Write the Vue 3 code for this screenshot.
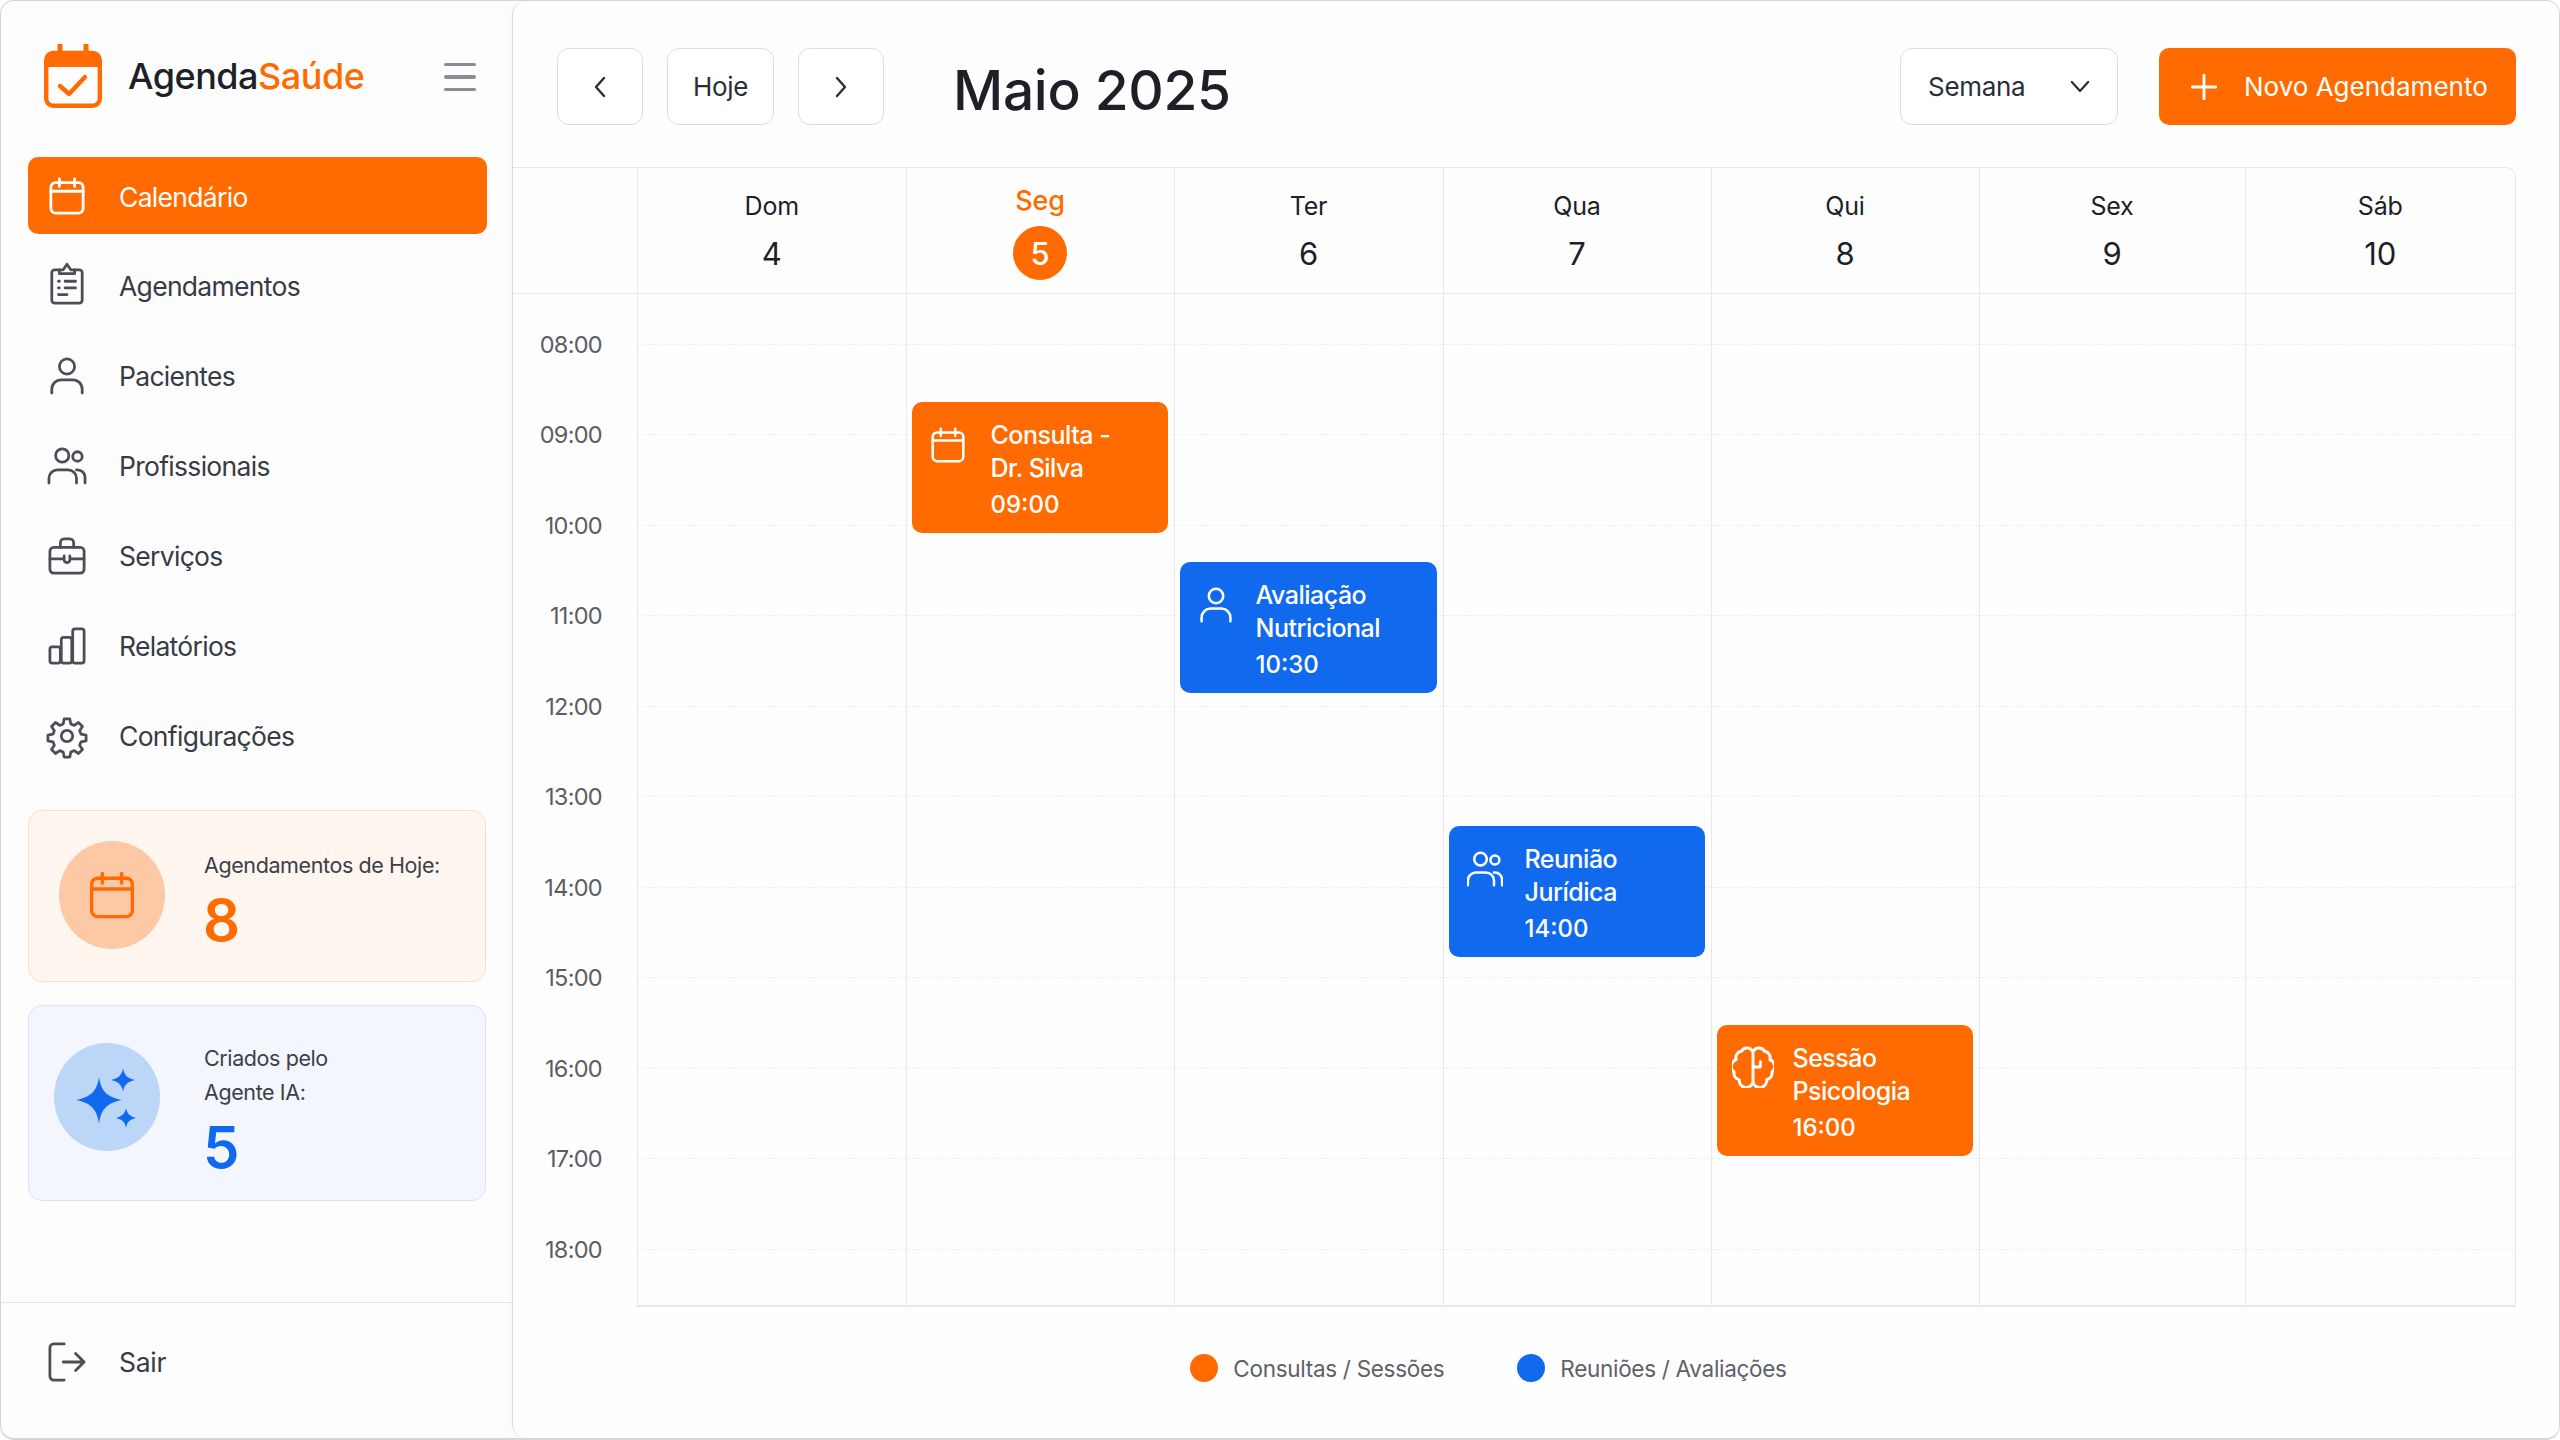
<template>
  <div class="app">
    <aside class="sidebar">
      <div class="brand">
        <svg class="logo" viewBox="0 0 58 64" fill="none">
          <path d="M16 0v10M42 0v10" stroke="#ff6b00" stroke-width="5" stroke-linecap="round" />
          <rect x="2.2" y="9" width="53.6" height="52.8" rx="7" stroke="#ff6b00" stroke-width="4.4" />
          <path d="M2 18a9 9 0 0 1 9-9h36a9 9 0 0 1 9 9v5H2z" fill="#ff6b00" />
          <path d="M16 42l9 8 16-17" stroke="#ff6b00" stroke-width="4.4" stroke-linecap="round" stroke-linejoin="round" />
        </svg>
        <span class="brand-name">Agenda<b>Saúde</b></span>
        <span class="burger"><i></i><i></i><i></i></span>
      </div>

      <nav class="nav">
        <a v-for="item in navItems" :key="item.label" class="nav-item" :class="{ active: item.active }">
          <span class="nav-icon">
            <svg viewBox="0 0 40 40" fill="none" stroke="currentColor" stroke-width="2.9" stroke-linecap="round" stroke-linejoin="round" v-html="icons[item.icon]"></svg>
          </span>
          {{ item.label }}
        </a>
      </nav>

      <div class="stat stat-orange">
        <span class="stat-circle">
          <svg viewBox="0 0 40 40" fill="none" stroke="#ff6b00" stroke-width="2.8" stroke-linecap="round" stroke-linejoin="round" v-html="icons.calendar"></svg>
        </span>
        <div class="stat-text">
          <p>Agendamentos de Hoje:</p>
          <strong>8</strong>
        </div>
      </div>

      <div class="stat stat-blue">
        <span class="stat-circle">
          <svg viewBox="0 0 106 108" fill="#116aee">
            <path d="M45 34c2 14 8 20 23 23-15 3-21 9-23 24-2-15-8-21-23-24 15-3 21-9 23-23z" />
            <path d="M69 25c1 7 4 10 12 12-8 2-11 5-12 12-1-7-4-10-12-12 8-2 11-5 12-12z" />
            <path d="M72 65c1 5 3 8 10 10-7 2-9 4-10 10-1-6-3-8-10-10 7-2 9-5 10-10z" />
          </svg>
        </span>
        <div class="stat-text">
          <p>Criados pelo<br />Agente IA:</p>
          <strong>5</strong>
        </div>
      </div>

      <div class="logout">
        <span class="nav-icon">
          <svg viewBox="0 0 40 40" fill="none" stroke="currentColor" stroke-width="2.9" stroke-linecap="round" stroke-linejoin="round">
            <path d="M17 1H6a4 4 0 0 0-4 4v30a4 4 0 0 0 4 4h11" />
            <path d="M16 20h22M29 11l9 9-9 9" />
          </svg>
        </span>
        Sair
      </div>
    </aside>

    <main class="panel">
      <header class="toolbar">
        <button class="btn square">
          <svg viewBox="0 0 16 24" fill="none" stroke="currentColor" stroke-width="2.4" stroke-linecap="round" stroke-linejoin="round"><path d="M12 3 4 12l8 9" /></svg>
        </button>
        <button class="btn today">Hoje</button>
        <button class="btn square">
          <svg viewBox="0 0 16 24" fill="none" stroke="currentColor" stroke-width="2.4" stroke-linecap="round" stroke-linejoin="round"><path d="m4 3 8 9-8 9" /></svg>
        </button>
        <h1>Maio 2025</h1>
        <button class="btn select">
          Semana
          <svg viewBox="0 0 22 14" fill="none" stroke="currentColor" stroke-width="2.4" stroke-linecap="round" stroke-linejoin="round"><path d="m2 2 9 10 9-10" /></svg>
        </button>
        <button class="btn primary">
          <svg viewBox="0 0 26 26" fill="none" stroke="currentColor" stroke-width="2.8" stroke-linecap="round"><path d="M13 1v24M1 13h24" /></svg>
          Novo Agendamento
        </button>
      </header>

      <div class="calendar">
        <div class="head">
          <div class="head-gutter"></div>
          <div v-for="day in days" :key="day.name" class="head-cell" :class="{ current: day.current }">
            <span class="day-name">{{ day.name }}</span>
            <span class="day-num">{{ day.num }}</span>
          </div>
        </div>
        <div class="body">
          <div class="times">
            <div v-for="hour in hours" :key="hour" class="time">{{ hour }}</div>
          </div>
          <div v-for="day in days" :key="day.name" class="column">
            <div v-for="hour in hours" :key="hour" class="slot"><i></i></div>
            <div
              v-for="ev in eventsFor(day.num)" :key="ev.time"
              class="event"
              :class="ev.color"
              :style="{ top: ev.top + 'px' }"
            >
              <svg class="event-icon" :class="'ic-' + ev.icon" viewBox="0 0 40 40" fill="none" stroke="#fff" stroke-width="2.8" stroke-linecap="round" stroke-linejoin="round" v-html="icons[ev.icon]"></svg>
              <div class="event-text">
                <p>{{ ev.title[0] }}<br />{{ ev.title[1] }}</p>
                <span>{{ ev.time }}</span>
              </div>
            </div>
          </div>
        </div>
      </div>

      <footer class="legend">
        <span class="legend-item"><i class="dot orange"></i>Consultas / Sessões</span>
        <span class="legend-item"><i class="dot blue"></i>Reuniões / Avaliações</span>
      </footer>
    </main>
  </div>
</template>

<script setup>
const icons = {
  calendar: '<rect x="3" y="6" width="34" height="32" rx="5"/><path d="M3 15h34M12 2v8M28 2v8"/>',
  clipboard: '<path d="M12 3H7a3 3 0 0 0-3 3v29a3 3 0 0 0 3 3h26a3 3 0 0 0 3-3V6a3 3 0 0 0-3-3h-5"/><path d="M12 7V3h4l4-6 4 6h4v4z"/><path d="M11 15h1M18 15h11M11 22h1M18 22h11M11 29h9"/>',
  user: '<circle cx="20" cy="10" r="8"/><path d="M4 38v-4a10 10 0 0 1 10-10h12a10 10 0 0 1 10 10v4"/>',
  users: '<circle cx="15" cy="9" r="7"/><circle cx="31" cy="10" r="5"/><path d="M1 38v-5a9 9 0 0 1 9-9h11a9 9 0 0 1 9 9v5M30 24h1a8 8 0 0 1 8 8v6"/>',
  briefcase: '<rect x="2" y="11" width="36" height="27" rx="4"/><path d="M13 11V6a4 4 0 0 1 4-4h6a4 4 0 0 1 4 4v5M2 23h15M23 23h15M17 20v4a3 3 0 0 0 6 0v-4"/>',
  chart: '<rect x="2" y="21" width="11" height="17" rx="2.5"/><rect x="14" y="11" width="11" height="27" rx="2.5"/><rect x="26" y="2" width="12" height="36" rx="2.5"/>',
  gear: '<circle cx="20" cy="20" r="6"/><path d="M17 2h6l1 5.300 3.600 1.500 4.500-3 4.200 4.200-3 4.500 1.500 3.600 5.300 1v6l-5.300 1-1.500 3.600 3 4.500-4.200 4.200-4.500-3-3.600 1.500-1 5.300h-6l-1-5.300-3.600-1.500-4.500 3-4.200-4.200 3-4.500-1.500-3.600-5.300-1v-6l5.300-1 1.500-3.600-3-4.500 4.200-4.200 4.500 3 3.600-1.500z"/>',
  brain: '<path d="M20 6a6 6 0 0 0-11-1 6 6 0 0 0-5 8 7 7 0 0 0-2 12 6 6 0 0 0 5 7 6 6 0 0 0 13 2zM20 6a6 6 0 0 1 11-1 6 6 0 0 1 5 8 7 7 0 0 1 2 12 6 6 0 0 1-5 7 6 6 0 0 1-13 2M20 20h7M27 20v-5"/>'
}

const navItems = [
  { label: 'Calendário', icon: 'calendar', active: true },
  { label: 'Agendamentos', icon: 'clipboard' },
  { label: 'Pacientes', icon: 'user' },
  { label: 'Profissionais', icon: 'users' },
  { label: 'Serviços', icon: 'briefcase' },
  { label: 'Relatórios', icon: 'chart' },
  { label: 'Configurações', icon: 'gear' }
]

const days = [
  { name: 'Dom', num: 4 },
  { name: 'Seg', num: 5, current: true },
  { name: 'Ter', num: 6 },
  { name: 'Qua', num: 7 },
  { name: 'Qui', num: 8 },
  { name: 'Sex', num: 9 },
  { name: 'Sáb', num: 10 }
]

const hours = ['08:00', '09:00', '10:00', '11:00', '12:00', '13:00', '14:00', '15:00', '16:00', '17:00', '18:00']

const events = [
  { day: 5, title: ['Consulta -', 'Dr. Silva'], time: '09:00', top: 108, color: 'orange', icon: 'calendar' },
  { day: 6, title: ['Avaliação', 'Nutricional'], time: '10:30', top: 268, color: 'blue', icon: 'user' },
  { day: 7, title: ['Reunião', 'Jurídica'], time: '14:00', top: 532, color: 'blue', icon: 'users' },
  { day: 8, title: ['Sessão', 'Psicologia'], time: '16:00', top: 731, color: 'orange', icon: 'brain' }
]

function eventsFor(num) {
  return events.filter(ev => ev.day === num)
}
</script>

<style>
html, body { margin: 0; background: #fff; }
</style>

<style scoped>
.app {
  display: flex;
  width: 2560px;
  height: 1440px;
  box-sizing: border-box;
  border: 1px solid #d6d6d8;
  border-width: 1px 1px 2px 1px;
  border-radius: 14px;
  overflow: hidden;
  background: #fdfdfd;
  font-family: Inter, "Noto Sans", sans-serif;
  color: #1d2127;
}
p, h1 { margin: 0; }

.sidebar {
  display: flex;
  flex-direction: column;
  width: 511px;
  flex: none;
  box-sizing: border-box;
  padding-top: 43px;
}
.brand {
  display: flex;
  align-items: center;
  height: 64px;
  padding: 0 36px 0 43px;
}
.logo { width: 58px; height: 64px; flex: none; }
.brand-name {
  margin-left: 26px;
  font-size: 36px;
  font-weight: 500;
  letter-spacing: -0.5px;
  color: #1d2127;
}
.brand-name b { font-weight: 500; color: #ff6b00; }
.burger {
  margin: 2px 0 0 auto;
  display: flex;
  flex-direction: column;
  gap: 9px;
  width: 32px;
}
.burger i { height: 3.5px; border-radius: 2px; background: #8a8d93; }

.nav {
  display: flex;
  flex-direction: column;
  gap: 13px;
  padding: 49px 25px 0 27px;
}
.nav-item {
  display: flex;
  align-items: center;
  height: 77px;
  padding-left: 20px;
  border-radius: 10px;
  font-size: 26.5px;
  letter-spacing: -0.7px;
  color: #363b45;
}
.nav-item.active {
  box-sizing: border-box;
  padding-top: 3px;
  background: #ff6b00;
  color: #fff;
}
.nav-icon {
  display: flex;
  width: 38px;
  height: 38px;
  margin-right: 33px;
  flex: none;
  color: #4a4e57;
}
.nav-item.active .nav-icon { color: #fff; margin-top: -3px; }
.nav-icon svg { width: 100%; height: 100%; overflow: visible; }

.stat {
  display: flex;
  align-items: center;
  box-sizing: border-box;
  margin: 0 26px 0 27px;
  border: 1.5px solid;
  border-radius: 14px;
}
.stat-orange {
  margin-top: 36px;
  height: 172px;
  padding-left: 30px;
  background: #fff6f0;
  border-color: #fcdcc7;
}
.stat-blue {
  margin-top: 23px;
  height: 196px;
  padding-left: 25px;
  background: #f3f7fd;
  border-color: #d3e4fb;
}
.stat-circle {
  display: flex;
  align-items: center;
  justify-content: center;
  width: 106px;
  height: 108px;
  flex: none;
  border-radius: 50%;
}
.stat-orange .stat-circle { margin-top: -2px; background: #fcc9a4; }
.stat-orange .stat-circle svg { width: 48px; height: 54px; }
.stat-blue .stat-circle { margin-top: -12px; background: #bcd6f8; }
.stat-blue .stat-circle svg { width: 106px; height: 108px; }
.stat-orange .stat-text { margin: 9px 0 0 39px; }
.stat-blue .stat-text { margin: 14px 0 0 44px; }
.stat-text p {
  font-size: 21.5px;
  line-height: 34px;
  letter-spacing: -0.4px;
  color: #3b4049;
}
.stat-text strong {
  display: block;
  margin: 5px 0 0 -1px;
  font-size: 58px;
  line-height: 66px;
  font-weight: 600;
}
.stat-orange strong { color: #ff6b00; }
.stat-blue strong { color: #116aee; }

.logout {
  display: flex;
  align-items: center;
  box-sizing: border-box;
  margin-top: auto;
  height: 136px;
  padding: 0 0 17px 47px;
  border-top: 1.5px solid #e6e6e8;
  font-size: 26.5px;
  letter-spacing: -0.3px;
  color: #363b45;
}

.panel {
  display: flex;
  flex-direction: column;
  flex: 1;
  min-width: 0;
  border-left: 1.5px solid #dcdcdf;
  border-radius: 14px 0 0 14px;
  background: #fefefe;
  box-shadow: -4px 0 10px rgba(0, 0, 0, 0.015);
}
.toolbar {
  display: flex;
  align-items: center;
  height: 166px;
  flex: none;
  box-sizing: border-box;
  padding: 5px 43px 0 44px;
}
.btn {
  display: flex;
  align-items: center;
  justify-content: center;
  box-sizing: border-box;
  height: 77px;
  border: 1.5px solid #dcdde2;
  border-radius: 12px;
  background: #fff;
  font: inherit;
  font-size: 26px;
  letter-spacing: -0.3px;
  color: #2a2e36;
}
.btn.square { width: 86px; }
.btn.square svg { width: 16px; height: 24px; }
.btn.today { width: 107px; margin: 0 24px; }
h1 {
  margin: 7px 0 0 69px;
  font-size: 55px;
  font-weight: 500;
  letter-spacing: -0.3px;
  color: #1d2127;
}
.btn.select {
  margin-left: auto;
  width: 218px;
  justify-content: space-between;
  padding: 0 27px 0 27px;
}
.btn.select svg { width: 20px; height: 13px; }
.btn.primary {
  width: 357px;
  margin-left: 41px;
  justify-content: flex-start;
  padding-left: 32px;
  gap: 27px;
  border: none;
  border-radius: 10px;
  background: #ff6b00;
  letter-spacing: 0;
  color: #fff;
}
.btn.primary svg { width: 26px; height: 26px; flex: none; }

.calendar {
  display: flex;
  flex-direction: column;
  flex: none;
  margin-right: 43px;
}
.head, .body {
  display: grid;
  grid-template-columns: 124px 268.5px 268px 269px 268px 268px 266px 1fr;
}
.head {
  height: 127px;
  box-sizing: border-box;
  border-top: 1.5px solid #e8e8ea;
  border-bottom: 1.5px solid #e8e8ea;
  border-right: 1.5px solid #e8e8ea;
  border-top-right-radius: 10px;
}
.head-cell {
  display: flex;
  flex-direction: column;
  align-items: center;
  border-left: 1.5px solid #e8e8ea;
}
.day-name {
  margin-top: 22.5px;
  font-size: 25px;
  line-height: 30px;
  letter-spacing: -0.2px;
}
.day-num {
  display: flex;
  align-items: center;
  justify-content: center;
  width: 54px;
  height: 54px;
  margin-top: 5.5px;
  font-size: 31px;
}
.current .day-name { margin-top: 17.5px; font-size: 27px; color: #ff6b00; font-weight: 500; }
.current .day-num {
  margin-top: 10.5px;
  border-radius: 50%;
  background: #ff6b00;
  color: #fff;
  font-weight: 500;
}

.body { height: 1013px; }
.times { padding-top: 5px; }
.time {
  display: flex;
  align-items: center;
  justify-content: flex-end;
  height: 90.5px;
  padding-right: 35px;
  font-size: 23.5px;
  letter-spacing: -0.7px;
  color: #5a5d64;
}
.column {
  position: relative;
  padding-top: 5px;
  border-left: 1.5px solid #e8e8ea;
  border-bottom: 2px solid #e8e8ea;
}
.column:last-child { border-right: 1.5px solid #e8e8ea; }
.slot {
  display: flex;
  align-items: center;
  height: 90.5px;
}
.slot i {
  display: block;
  width: 100%;
  border-top: 1.5px dashed #efeff0;
}
.event {
  position: absolute;
  left: 5px;
  right: 6px;
  display: flex;
  box-sizing: border-box;
  height: 131px;
  padding: 17px 18px;
  border-radius: 10px;
  color: #fff;
}
.event.orange { background: #ff6b00; }
.event.blue { background: #116aee; }
.event-icon { width: 36px; height: 40px; flex: none; margin-top: 6px; }
.ic-calendar { margin-right: 3px; }
.ic-brain { width: 42px; height: 42px; margin: 4px -3px 0 -3px; }
.event-text { margin-left: 22px; }
.event-text p {
  font-size: 25px;
  line-height: 33px;
  font-weight: 500;
  letter-spacing: -0.5px;
}
.event-text span {
  display: block;
  margin-top: 5px;
  font-size: 24px;
  line-height: 30px;
  font-weight: 500;
}

.legend {
  display: flex;
  justify-content: center;
  gap: 73px;
  padding: 47px 95px 0 0;
}
.legend-item {
  display: flex;
  align-items: center;
  gap: 15px;
  font-size: 22.5px;
  letter-spacing: -0.3px;
  color: #5e6167;
}
.dot {
  width: 28px;
  height: 28px;
  border-radius: 50%;
}
.dot.orange { background: #ff6b00; }
.dot.blue { background: #116aee; }
</style>
